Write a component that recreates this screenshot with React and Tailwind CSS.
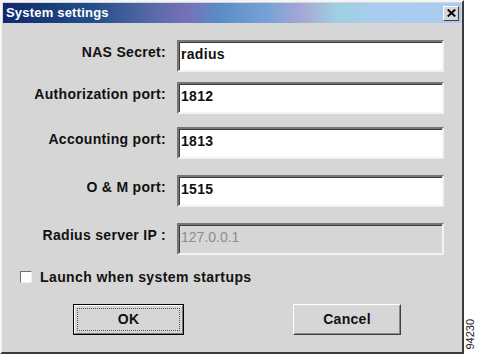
import React from 'react';

const font = { fontFamily: '"Liberation Sans", Arial, sans-serif' };

function Field({ label, value, disabled, mt }) {
  return (
    <div className={`flex items-start ${mt}`}>
      <div className="w-[164px] pt-[4px] pr-[1px] text-right text-[14px] leading-[16px] font-bold tracking-[0.3px] text-[#111]">
        {label}
      </div>
      <div
        className={`ml-[10px] w-[267px] h-[32px] border-2 border-t-[#767676] border-l-[#767676] border-b-[#f2f2f2] border-r-[#f2f2f2] shadow-[inset_1px_1px_0_#3c3c3c] pl-[2px] pt-[4px] text-[14px] leading-[16px] ${
          disabled ? 'bg-[#d6d6d6] text-[#8c8c8c] font-normal tracking-[0px]' : 'bg-white text-[#111] font-bold tracking-[0.3px]'
        }`}
      >
        {value}
      </div>
    </div>
  );
}

export default function App() {
  return (
    <div className="w-[477px] h-[354px] bg-white flex" style={font}>
      {/* dialog */}
      <div className="w-[464px] h-[354px] bg-[#d6d6d6] border-2 border-t-[#f4f4f4] border-l-[#f4f4f4] border-r-[#3a3a3a] border-b-[#3a3a3a] p-[1px] flex flex-col">
        {/* title bar */}
        <div className="h-[20px] flex items-center justify-between pl-[3px] pr-[2px] bg-[linear-gradient(90deg,#12286c_0%,#234f8a_20%,#5a6aa8_33%,#7770b8_40%,#5a8cc6_47%,#78a2d6_58%,#a6a6d6_65%,#9ed0e0_73%,#a8cdee_80%,#a8ccf0_100%)]">
          <span className="text-white font-bold text-[13px] leading-[16px] tracking-[0.2px]">System settings</span>
          <div className="w-[16px] h-[15px] bg-[#d6d6d6] border border-t-white border-l-white border-r-[#404040] border-b-[#404040] flex items-center justify-center">
            <svg width="9" height="8" viewBox="0 0 9 8">
              <path d="M0.8 0.6 L8.2 7.4 M8.2 0.6 L0.8 7.4" stroke="#000" strokeWidth="2" />
            </svg>
          </div>
        </div>

        <Field label="NAS Secret:" value="radius" mt="mt-[17px]" />
        <Field label="Authorization port:" value="1812" mt="mt-[10px]" />
        <Field label="Accounting port:" value="1813" mt="mt-[13px]" />
        <Field label="O & M port:" value="1515" mt="mt-[16px]" />
        <Field label="Radius server IP :" value="127.0.0.1" disabled mt="mt-[16px]" />

        {/* checkbox */}
        <div className="mt-[14px] flex items-center pl-[17px]">
          <div className="w-[12px] h-[12px] bg-white border border-t-[#6e6e6e] border-l-[#6e6e6e] border-r-[#eeeeee] border-b-[#eeeeee]" />
          <span className="ml-[8px] text-[14px] leading-[16px] font-bold tracking-[0.4px] text-[#111]">
            Launch when system startups
          </span>
        </div>

        {/* buttons */}
        <div className="mt-[19px] flex">
          <div className="ml-[70px] w-[111px] h-[31px] border border-black">
            <div className="w-full h-full border border-t-white border-l-white border-r-[#7a7a7a] border-b-[#7a7a7a] p-[2px]">
              <div className="w-full h-full border border-dotted border-[#555] flex items-center justify-center text-[14px] font-bold tracking-[0.3px] text-[#111]">
                OK
              </div>
            </div>
          </div>
          <div className="ml-[109px] w-[108px] h-[31px] border border-t-white border-l-white border-r-[#404040] border-b-[#404040]">
            <div className="w-full h-full border border-transparent border-r-[#8a8a8a] border-b-[#8a8a8a] flex items-center justify-center text-[14px] font-bold tracking-[0.3px] text-[#111]">
              Cancel
            </div>
          </div>
        </div>
      </div>

      {/* figure number */}
      <div className="flex-1 flex flex-col justify-end items-center pb-[4px]">
        <span className="[writing-mode:vertical-rl] rotate-180 text-[11px] leading-[11px] text-[#222]">94230</span>
      </div>
    </div>
  );
}
